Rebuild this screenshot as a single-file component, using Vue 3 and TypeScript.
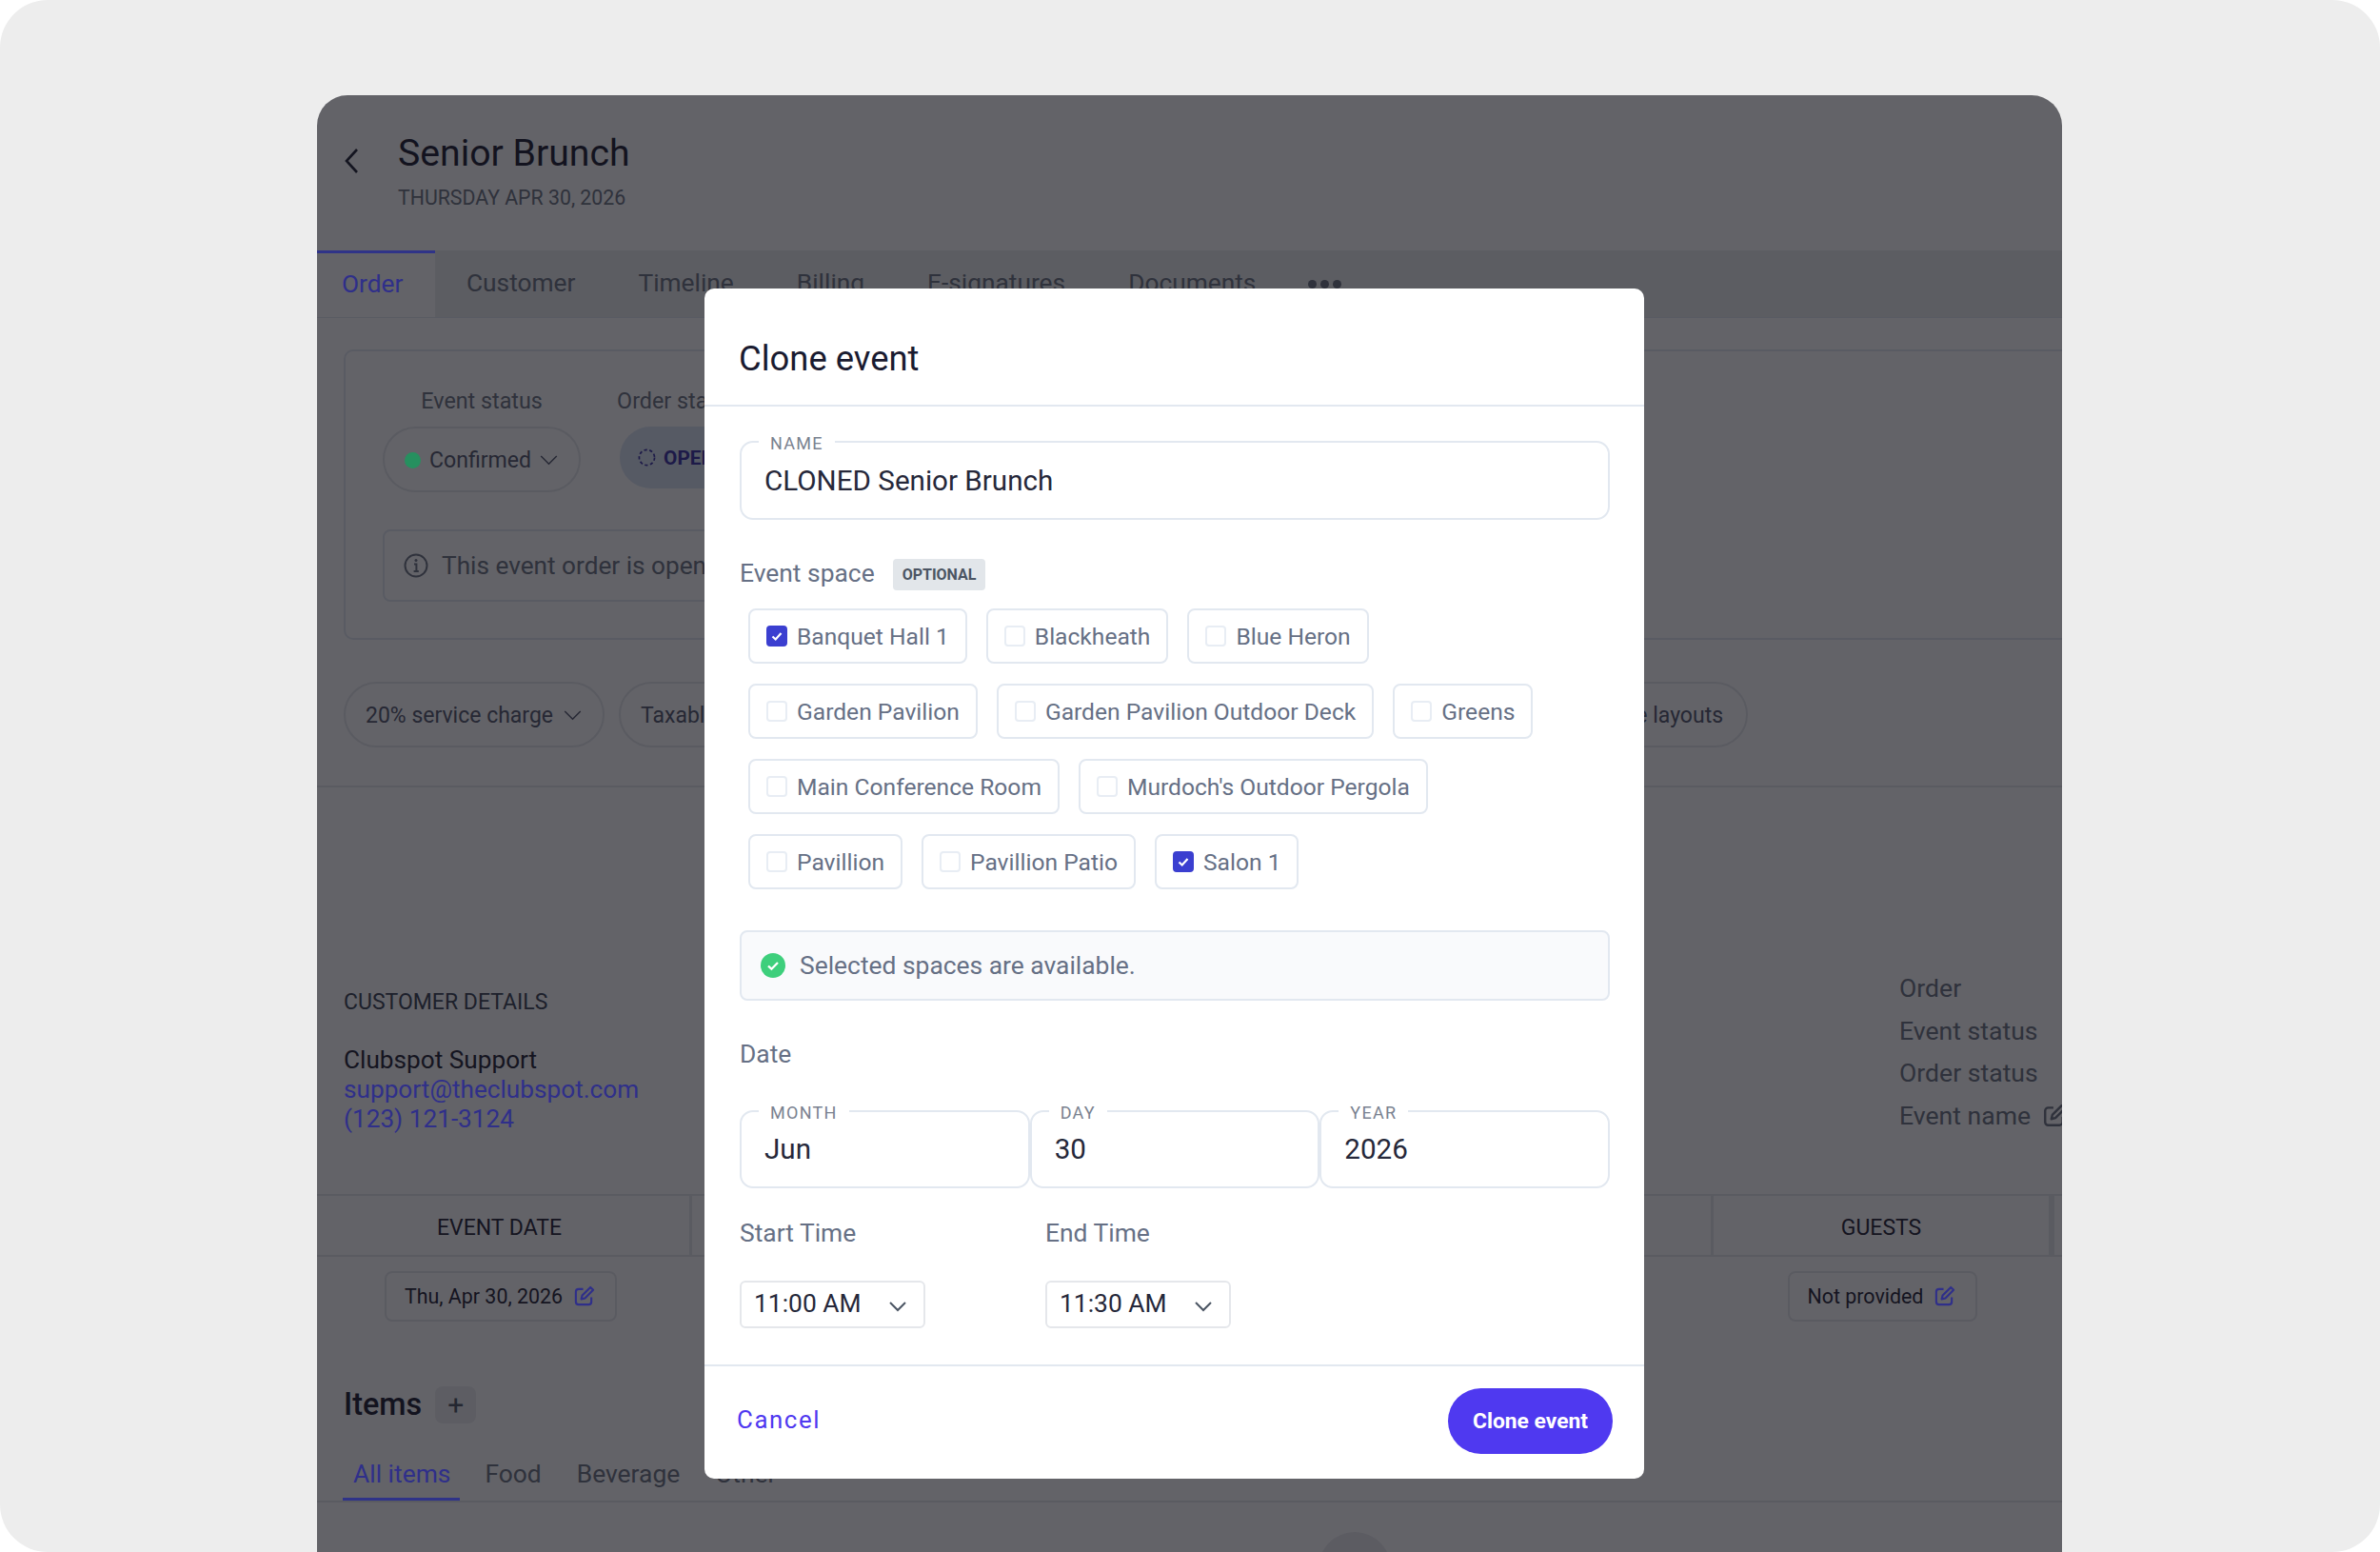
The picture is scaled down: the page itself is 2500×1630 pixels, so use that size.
<script setup lang="ts">
interface Space {
  name: string
  checked?: boolean
}

const spaceRows: Space[][] = [
  [{ name: 'Banquet Hall 1', checked: true }, { name: 'Blackheath' }, { name: 'Blue Heron' }],
  [{ name: 'Garden Pavilion' }, { name: 'Garden Pavilion Outdoor Deck' }, { name: 'Greens' }],
  [{ name: 'Main Conference Room' }, { name: "Murdoch's Outdoor Pergola" }],
  [{ name: 'Pavillion' }, { name: 'Pavillion Patio' }, { name: 'Salon 1', checked: true }],
]

const tabs = ['Customer', 'Timeline', 'Billing', 'E-signatures', 'Documents']
const dateFields = [
  { label: 'Month', value: 'Jun' },
  { label: 'Day', value: '30' },
  { label: 'Year', value: '2026' },
]
const times = [
  { label: 'Start Time', value: '11:00 AM' },
  { label: 'End Time', value: '11:30 AM' },
]
const summary = ['Order', 'Event status', 'Order status']
</script>

<template>
  <div class="frame">
    <div class="window">
      <header class="page-head">
        <svg class="back" viewBox="0 0 16 28" fill="none"><path d="M14 2 3 14l11 12" stroke="currentColor" stroke-width="2.6" /></svg>
        <div>
          <h1 class="page-title">Senior Brunch</h1>
          <div class="page-date">THURSDAY APR 30, 2026</div>
        </div>
      </header>

      <nav class="tabbar">
        <a class="tab active"><span class="lit">Order</span></a>
        <a v-for="t in tabs" :key="t" class="tab">{{ t }}</a>
        <span class="more"><i></i><i></i><i></i></span>
      </nav>

      <section class="status-card">
        <div class="status-row">
          <div class="status-col">
            <div class="status-label">Event status</div>
            <div class="pill">
              <span class="dot"></span>
              <span>Confirmed</span>
              <svg class="pill-chev" viewBox="0 0 20 12" fill="none"><path d="m1 1 9 9 9-9" stroke="currentColor" stroke-width="1.6" /></svg>
            </div>
          </div>
          <div class="status-col order-col">
            <div class="status-label">Order status</div>
            <div class="pill open">
              <svg class="spin" viewBox="0 0 20 20" fill="none"><circle cx="10" cy="10" r="8.5" stroke="currentColor" stroke-width="1.8" stroke-dasharray="3.5 2.6" /></svg>
              <span>OPEN</span>
            </div>
          </div>
        </div>
        <div class="notice">
          <svg class="notice-icon" viewBox="0 0 26 26" fill="none">
            <circle cx="13" cy="13" r="11.5" stroke="currentColor" stroke-width="2" />
            <path d="M11 11.5h2.4V19M10.6 19h5.2" stroke="currentColor" stroke-width="2" />
            <circle cx="13" cy="7.6" r="1.5" fill="currentColor" />
          </svg>
          <span>This event order is open</span>
        </div>
      </section>

      <div class="option-row">
        <div class="pill option">
          <span>20% service charge</span>
          <svg class="pill-chev" viewBox="0 0 20 12" fill="none"><path d="m1 1 9 9 9-9" stroke="currentColor" stroke-width="1.6" /></svg>
        </div>
        <div class="pill option taxable"><span>Taxable</span></div>
        <div class="pill option layouts"><span>Table layouts</span></div>
      </div>

      <div class="customer-row">
        <div>
          <div class="cust-title">CUSTOMER DETAILS</div>
          <div class="cust-name">Clubspot Support</div>
          <a class="cust-link lit">support@theclubspot.com</a>
          <a class="cust-link lit">(123) 121-3124</a>
        </div>
        <ul class="summary">
          <li v-for="s in summary" :key="s">{{ s }}</li>
          <li class="summary-edit">
            Event name
            <svg class="edit" viewBox="0 0 24 24" fill="none"><path d="M11 4H6a3 3 0 0 0-3 3v11a3 3 0 0 0 3 3h11a3 3 0 0 0 3-3v-5M9 15l1-4 9-9 3 3-9 9-4 1Z" stroke="currentColor" stroke-width="2.2" stroke-linejoin="round" /></svg>
          </li>
        </ul>
      </div>

      <div class="table-head">
        <div class="th first">EVENT DATE</div>
        <div class="th spacer"></div>
        <div class="th guests">GUESTS</div>
        <div class="th"></div>
      </div>
      <div class="table-body">
        <div class="td first">
          <span class="cell-box">
            Thu, Apr 30, 2026
            <svg class="edit lit" viewBox="0 0 24 24" fill="none"><path d="M11 4H6a3 3 0 0 0-3 3v11a3 3 0 0 0 3 3h11a3 3 0 0 0 3-3v-5M9 15l1-4 9-9 3 3-9 9-4 1Z" stroke="currentColor" stroke-width="2.2" stroke-linejoin="round" /></svg>
          </span>
        </div>
        <div class="td spacer"></div>
        <div class="td guests">
          <span class="cell-box">
            Not provided
            <svg class="edit lit" viewBox="0 0 24 24" fill="none"><path d="M11 4H6a3 3 0 0 0-3 3v11a3 3 0 0 0 3 3h11a3 3 0 0 0 3-3v-5M9 15l1-4 9-9 3 3-9 9-4 1Z" stroke="currentColor" stroke-width="2.2" stroke-linejoin="round" /></svg>
          </span>
        </div>
      </div>

      <div class="items-head">
        <h2 class="items-title">Items</h2>
        <span class="plus">+</span>
      </div>
      <div class="item-tabs">
        <a class="item-tab active"><span class="lit">All items</span></a>
        <a class="item-tab">Food</a>
        <a class="item-tab">Beverage</a>
        <a class="item-tab">Other</a>
      </div>
      <div class="round-btn"></div>

      <div class="overlay"></div>

      <div class="modal">
        <div class="modal-head">Clone event</div>
        <div class="modal-body">
          <label class="float-field name-field">
            <span class="float-label">NAME</span>
            <span class="float-value">CLONED Senior Brunch</span>
          </label>

          <div class="space-title">
            <span class="field-title">Event space</span>
            <span class="badge">OPTIONAL</span>
          </div>

          <div class="spaces">
            <div v-for="(row, i) in spaceRows" :key="i" class="space-row">
              <div v-for="s in row" :key="s.name" class="space-chip">
                <span class="check" :class="{ on: s.checked }">
                  <svg v-if="s.checked" viewBox="0 0 22 22" fill="none"><path d="m6.5 11.5 3.2 3 5.8-6.5" stroke="#fff" stroke-width="2.2" /></svg>
                </span>
                <span>{{ s.name }}</span>
              </div>
            </div>
          </div>

          <div class="avail">
            <svg class="avail-icon" viewBox="0 0 26 26"><circle cx="13" cy="13" r="13" fill="#3ecf7c" /><path d="m8 13.5 3.4 3.2L18 10" fill="none" stroke="#fff" stroke-width="2.3" /></svg>
            <span>Selected spaces are available.</span>
          </div>

          <div class="field-title date-title">Date</div>
          <div class="date-grid">
            <label v-for="d in dateFields" :key="d.label" class="float-field">
              <span class="float-label">{{ d.label.toUpperCase() }}</span>
              <span class="float-value">{{ d.value }}</span>
            </label>
          </div>

          <div class="times">
            <div v-for="t in times" :key="t.label" class="time-col">
              <div class="field-title">{{ t.label }}</div>
              <div class="select">
                <span>{{ t.value }}</span>
                <svg class="select-chev" viewBox="0 0 20 12" fill="none"><path d="m2 2 8 8 8-8" stroke="currentColor" stroke-width="2" /></svg>
              </div>
            </div>
          </div>
        </div>
        <div class="modal-foot">
          <a class="cancel">Cancel</a>
          <button class="clone-btn">Clone event</button>
        </div>
      </div>
    </div>
  </div>
</template>

<style>
html,
body {
  margin: 0;
  background: #fff;
}
</style>

<style scoped>
* {
  box-sizing: border-box;
}

.frame {
  width: 2500px;
  height: 1630px;
  padding: 100px 334px 0 333px;
  background: #ededed;
  border-radius: 50px;
  overflow: hidden;
  font-family: Roboto, "Liberation Sans", sans-serif;
}

.window {
  position: relative;
  height: 1530px;
  background: #fff;
  border-radius: 32px 32px 0 0;
  overflow: hidden;
  color: #1f2033;
}

.overlay {
  position: absolute;
  inset: 0;
  background: rgba(15, 15, 23, 0.65);
}

/* accents keep their colour through the backdrop */
.lit {
  position: relative;
  z-index: 1;
  color: #2f2f8a;
}

/* page behind the dialog */
.page-head {
  display: flex;
  height: 163px;
  padding: 39px 0 0 28px;
  gap: 41px;
}

.back {
  width: 16px;
  height: 28px;
  margin-top: 16px;
  color: #1f2033;
}

.page-title {
  margin: 0;
  font-size: 39.2px;
  line-height: 44px;
  font-weight: 400;
  color: #1a1b30;
}

.page-date {
  margin-top: 11px;
  font-size: 21.3px;
  line-height: 28px;
  color: #6b7280;
}

.tabbar {
  display: flex;
  align-items: center;
  height: 71px;
  background: #eaedee;
  border-bottom: 1px solid #e2e8f0;
  font-size: 26.3px;
  color: #6b7280;
}

.tab {
  padding: 0 33px 3px;
}

.tab.active {
  position: relative;
  display: flex;
  align-items: center;
  align-self: stretch;
  width: 124px;
  padding: 3px 0 3px 26px;
  background: #fff;
}

.tab.active::before {
  content: "";
  position: absolute;
  z-index: 1;
  left: 0;
  right: 0;
  top: 0;
  height: 3px;
  background: #2f3388;
}

.more {
  display: flex;
  gap: 4px;
  margin-left: 22px;
}

.more i {
  width: 9px;
  height: 9px;
  border-radius: 50%;
  background: #6b7280;
}

.status-card {
  width: 1900px;
  height: 305px;
  margin: 33px 0 0 28px;
  padding: 37px 39px;
  border: 2px solid #e2e8f0;
  border-radius: 10px;
}

.status-row {
  display: flex;
  gap: 41px;
}

.status-label {
  text-align: center;
  font-size: 23.3px;
  line-height: 30px;
  color: #6b7280;
}

.order-col .status-label {
  margin-left: -3px;
  text-align: left;
}

.pill {
  display: flex;
  align-items: center;
  gap: 9px;
  height: 69px;
  margin-top: 12px;
  padding: 2px 22px 0 21px;
  border: 2px solid #e5e7eb;
  border-radius: 35px;
  font-size: 23.1px;
  color: #52566b;
}

.dot {
  position: relative;
  z-index: 1;
  width: 17px;
  height: 17px;
  border-radius: 50%;
  background: #26905f;
}

.pill-chev {
  width: 19px;
  height: 11px;
}

.pill.open {
  width: 220px;
  height: 65px;
  padding: 0 0 0 19px;
  gap: 8px;
  border: 0;
  background: #dbe4f3;
  font-size: 20.8px;
  font-weight: 700;
  color: #3730a3;
}

.spin {
  width: 19px;
  height: 19px;
}

.notice {
  display: flex;
  align-items: center;
  gap: 14px;
  width: 1000px;
  height: 76px;
  margin-top: 39px;
  padding-left: 20px;
  border: 2px solid #e2e8f0;
  border-radius: 8px;
  font-size: 26.2px;
  color: #6b7280;
}

.notice-icon {
  width: 26px;
  height: 26px;
}

.option-row {
  display: flex;
  gap: 15px;
  height: 111px;
  padding: 0 0 0 28px;
  margin-top: 44px;
  border-bottom: 2px solid #e5e7eb;
}

.pill.option {
  margin: 0;
  gap: 11px;
  font-size: 23px;
}

.taxable {
  width: 600px;
}

.layouts {
  width: 571px;
  justify-content: flex-end;
  padding-right: 24px;
}

.customer-row {
  display: flex;
  justify-content: space-between;
  height: 427px;
  padding: 211px 0 0 28px;
}

.cust-title {
  font-size: 23px;
  line-height: 30px;
  color: #374151;
}

.cust-name {
  margin-top: 30px;
  font-size: 26.2px;
  line-height: 31px;
  color: #1f2033;
}

.cust-link {
  display: block;
  font-size: 26.2px;
  line-height: 31px;
}

.summary {
  width: 171px;
  margin: -22px 0 0;
  padding: 0;
  list-style: none;
  font-size: 26.6px;
  line-height: 44.5px;
  color: #6b7280;
  white-space: nowrap;
}

.summary-edit {
  display: flex;
  align-items: center;
  gap: 12px;
}

.edit {
  width: 23px;
  height: 23px;
  flex: none;
}

.summary-edit .edit {
  width: 26px;
  height: 26px;
}

.table-head {
  display: flex;
  height: 66px;
  border-top: 2px solid #e5e7eb;
  border-bottom: 2px solid #e5e7eb;
  font-size: 23px;
  color: #1f2033;
}

.th {
  display: flex;
  align-items: center;
  justify-content: center;
  padding-top: 5px;
  border-right: 3px solid #e5e7eb;
}

.first {
  width: 394px;
  padding-right: 8px;
}

.spacer {
  width: 1073px;
}

.guests {
  width: 355px;
}

.table-body {
  display: flex;
  height: 133px;
  padding-top: 15px;
}

.td {
  display: flex;
  justify-content: center;
  align-items: flex-start;
}

.cell-box {
  display: flex;
  align-items: center;
  gap: 11px;
  height: 53px;
  padding: 0 21px 0 19px;
  border: 2px solid #e5e7eb;
  border-radius: 8px;
  font-size: 21.4px;
  color: #1f2033;
  white-space: nowrap;
}

.items-head {
  display: flex;
  align-items: center;
  gap: 14px;
  height: 40px;
  margin-top: 2px;
  margin-left: 28px;
}

.items-title {
  margin: 0;
  font-size: 32.4px;
  font-weight: 500;
  color: #1a1b30;
}

.plus {
  display: flex;
  align-items: center;
  justify-content: center;
  width: 43px;
  height: 39px;
  border-radius: 8px;
  background: #edeef0;
  font-size: 30px;
  color: #4b5563;
}

.item-tabs {
  display: flex;
  gap: 27px;
  height: 60px;
  margin-top: 23px;
  padding: 15px 0 0 27px;
  border-bottom: 2px solid #e5e7eb;
  font-size: 26.4px;
  color: #6b7280;
}

.item-tab {
  height: 43px;
  padding: 0 5px;
  line-height: 30px;
}

.item-tab.active {
  position: relative;
  margin-right: -6px;
  padding: 0 10px 0 11px;
}

.item-tab.active::after {
  content: "";
  position: absolute;
  z-index: 1;
  left: 0;
  right: 0;
  bottom: 0;
  height: 3px;
  background: #2f3388;
}

.round-btn {
  width: 76px;
  height: 76px;
  margin: 31px 0 0 1052px;
  border-radius: 50%;
  background: #eaeaee;
}

/* dialog */
.modal {
  position: absolute;
  z-index: 2;
  left: 407px;
  top: 203px;
  display: flex;
  flex-direction: column;
  width: 987px;
  height: 1250px;
  background: #fff;
  border-radius: 10px;
}

.modal-head {
  height: 124px;
  padding: 52px 37px 0 36px;
  border-bottom: 2px solid #e2e8f0;
  font-size: 36.4px;
  line-height: 44px;
  font-weight: 400;
  color: #1a1b30;
}

.modal-body {
  flex: 1;
  padding: 36px 36px 0 37px;
}

.float-field {
  position: relative;
  display: flex;
  align-items: center;
  flex: 1;
  height: 82px;
  padding: 0 24px 0 24px;
  border: 2px solid #e2e8f0;
  border-radius: 14px;
}

.name-field {
  width: 914px;
  height: 83px;
}

.float-label {
  position: absolute;
  left: 18px;
  top: -9px;
  padding: 0 12px;
  background: #fff;
  font-size: 18px;
  line-height: 20px;
  letter-spacing: 1.3px;
  color: #7a8290;
}

.float-value {
  font-size: 29.6px;
  color: #26283a;
}

.space-title {
  display: flex;
  align-items: center;
  gap: 19px;
  margin-top: 38px;
}

.field-title {
  font-size: 26.4px;
  line-height: 34px;
  color: #667085;
}

.badge {
  display: flex;
  align-items: center;
  height: 33px;
  margin-top: 3px;
  padding: 0 10px;
  background: #e2e6ea;
  border-radius: 4px;
  font-size: 16px;
  font-weight: 700;
  color: #4b5563;
}

.spaces {
  display: flex;
  flex-direction: column;
  gap: 21px;
  margin-top: 19px;
  padding-left: 9px;
}

.space-row {
  display: flex;
  gap: 20px;
}

.space-chip {
  display: flex;
  align-items: center;
  gap: 10px;
  height: 58px;
  padding: 0 17px;
  border: 2px solid #e2e8f0;
  border-radius: 8px;
  font-size: 24.6px;
  color: #667085;
  white-space: nowrap;
}

.check {
  width: 22px;
  height: 22px;
  flex: none;
  border: 2px solid #e8edf4;
  border-radius: 4px;
}

.check.on {
  border-color: #3b3fd0;
  background: #3b3fd0;
}

.check svg {
  display: block;
  width: 22px;
  height: 22px;
  margin: -2px;
}

.avail {
  display: flex;
  align-items: center;
  gap: 15px;
  width: 914px;
  height: 74px;
  margin-top: 43px;
  padding-left: 20px;
  background: #f9fafc;
  border: 2px solid #e2e8f0;
  border-radius: 8px;
  font-size: 26.4px;
  color: #667085;
}

.avail-icon {
  width: 26px;
  height: 26px;
}

.date-title {
  margin-top: 39px;
}

.date-grid {
  display: flex;
  width: 914px;
  margin-top: 42px;
}

.times {
  display: flex;
  gap: 126px;
  margin-top: 30px;
}

.time-col {
  width: 195px;
}

.select {
  display: flex;
  align-items: center;
  justify-content: space-between;
  height: 50px;
  margin-top: 33px;
  padding: 0 17px 2px 13px;
  border: 2px solid #e5e7eb;
  border-radius: 6px;
  font-size: 26.4px;
  color: #26283a;
}

.select-chev {
  width: 20px;
  height: 12px;
  margin-top: 6px;
  color: #4b5563;
}

.modal-foot {
  display: flex;
  align-items: center;
  justify-content: space-between;
  height: 120px;
  padding: 0 33px 3px 34px;
  border-top: 2px solid #e2e8f0;
}

.cancel {
  margin-bottom: 3px;
  font-size: 25.8px;
  letter-spacing: 1.6px;
  color: #4f39f0;
}

.clone-btn {
  width: 173px;
  height: 69px;
  border: 0;
  border-radius: 35px;
  background: #4f39f0;
  font-family: inherit;
  font-size: 22.8px;
  font-weight: 700;
  color: #fff;
}
</style>
